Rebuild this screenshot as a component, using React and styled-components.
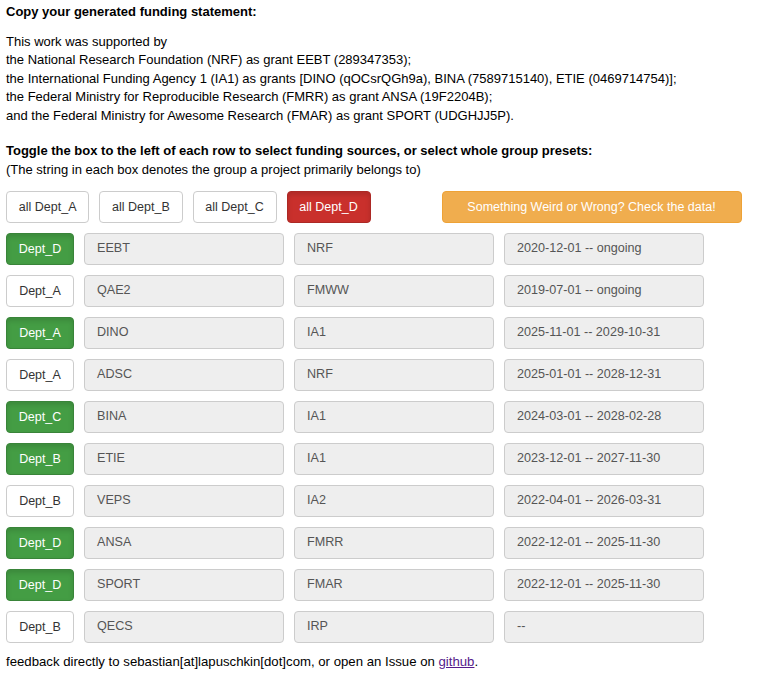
import React from "react";
import styled, { createGlobalStyle, css } from "styled-components";

const Global = createGlobalStyle`
  html, body { margin: 0; padding: 0; background: #fff; }
  body {
    font-family: "Liberation Sans", Arial, sans-serif;
    font-size: 13px;
    line-height: 1.42857;
    color: #000;
  }
`;

const Page = styled.div`
  padding: 3px 6px 10px 6px;
`;

const Heading = styled.div`
  font-weight: bold;
  margin-bottom: ${(p) => p.$mb || 0}px;
`;

const Statement = styled.div`
  margin-bottom: 17px;
`;

const Line = styled.div``;

const Note = styled.div`
  margin-bottom: 11px;
`;

const PresetBar = styled.div`
  display: flex;
  gap: 10px;
  margin-bottom: 10px;
`;

const Rows = styled.div`
  display: flex;
  flex-direction: column;
  gap: 10px;
`;

const Row = styled.div`
  display: flex;
  gap: 10px;
`;

const variants = {
  default: css`
    background: #fff;
    border-color: #ccc;
    color: #333;
  `,
  success: css`
    background: #449d44;
    border-color: #398439;
    color: #fff;
    box-shadow: inset 0 3px 5px rgba(0, 0, 0, 0.125);
  `,
  danger: css`
    background: #c9302c;
    border-color: #ac2925;
    color: #fff;
    box-shadow: inset 0 3px 5px rgba(0, 0, 0, 0.125);
  `,
  warning: css`
    background: #f0ad4e;
    border-color: #eea236;
    color: #fff;
  `,
};

const Button = styled.button`
  box-sizing: border-box;
  flex: none;
  height: 32px;
  padding: 0 11.8px;
  border: 1px solid;
  border-radius: 4px;
  font-family: "Liberation Sans", Arial, sans-serif;
  font-size: 12.5px;
  white-space: nowrap;
  cursor: pointer;
  ${(p) => variants[p.$variant || "default"]}
  ${(p) => p.$width && css`width: ${p.$width}px; padding: 0;`}
  ${(p) => p.$ml && css`margin-left: ${p.$ml}px;`}
`;

const Field = styled.div`
  box-sizing: border-box;
  flex: none;
  width: 200px;
  height: 32px;
  padding: 0 12px;
  display: flex;
  align-items: center;
  background: #eee;
  border: 1px solid #ccc;
  border-radius: 4px;
  color: #555;
  font-size: 12.6px;
`;

const Footer = styled.div`
  margin-top: 10px;
  font-size: 13.2px;
`;

const Link = styled.a`
  color: #551a8b;
  text-decoration: underline;
`;

const rows = [
  ["Dept_D", true, "EEBT", "NRF", "2020-12-01 -- ongoing"],
  ["Dept_A", false, "QAE2", "FMWW", "2019-07-01 -- ongoing"],
  ["Dept_A", true, "DINO", "IA1", "2025-11-01 -- 2029-10-31"],
  ["Dept_A", false, "ADSC", "NRF", "2025-01-01 -- 2028-12-31"],
  ["Dept_C", true, "BINA", "IA1", "2024-03-01 -- 2028-02-28"],
  ["Dept_B", true, "ETIE", "IA1", "2023-12-01 -- 2027-11-30"],
  ["Dept_B", false, "VEPS", "IA2", "2022-04-01 -- 2026-03-31"],
  ["Dept_D", true, "ANSA", "FMRR", "2022-12-01 -- 2025-11-30"],
  ["Dept_D", true, "SPORT", "FMAR", "2022-12-01 -- 2025-11-30"],
  ["Dept_B", false, "QECS", "IRP", "--"],
];

export default function App() {
  return (
    <Page>
      <Global />
      <Heading $mb={11}>Copy your generated funding statement:</Heading>
      <Statement>
        <Line>This work was supported by</Line>
        <Line>the National Research Foundation (NRF) as grant EEBT (289347353);</Line>
        <Line>
          the International Funding Agency 1 (IA1) as grants [DINO (qOCsrQGh9a), BINA (7589715140), ETIE (0469714754)];
        </Line>
        <Line>the Federal Ministry for Reproducible Research (FMRR) as grant ANSA (19F2204B);</Line>
        <Line>and the Federal Ministry for Awesome Research (FMAR) as grant SPORT (UDGHJJ5P).</Line>
      </Statement>
      <Heading>Toggle the box to the left of each row to select funding sources, or select whole group presets:</Heading>
      <Note>(The string in each box denotes the group a project primarily belongs to)</Note>
      <PresetBar>
        <Button>all Dept_A</Button>
        <Button>all Dept_B</Button>
        <Button>all Dept_C</Button>
        <Button $variant="danger">all Dept_D</Button>
        <Button $variant="warning" $width={300} $ml={61}>
          Something Weird or Wrong? Check the data!
        </Button>
      </PresetBar>
      <Rows>
        {rows.map(([dept, on, code, agency, period], i) => (
          <Row key={i}>
            <Button $variant={on ? "success" : "default"} $width={68}>
              {dept}
            </Button>
            <Field>{code}</Field>
            <Field>{agency}</Field>
            <Field>{period}</Field>
          </Row>
        ))}
      </Rows>
      <Footer>
        feedback directly to sebastian[at]lapuschkin[dot]com, or open an Issue on <Link href="#">github</Link>.
      </Footer>
    </Page>
  );
}
